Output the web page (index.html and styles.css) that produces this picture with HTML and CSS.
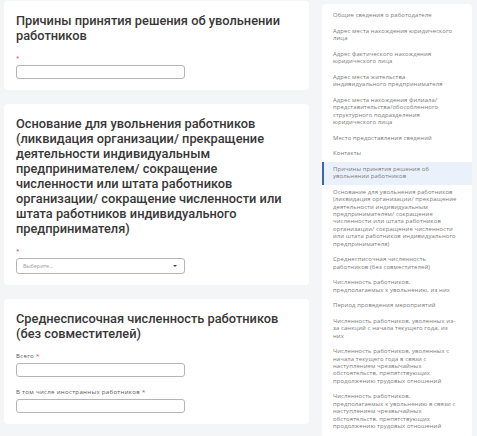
FILE: index.html
```html
<!DOCTYPE html>
<html lang="ru">
<head>
	<meta charset="UTF-8">
	<title>Сведения о высвобождении работников</title>
	<link rel="stylesheet" href="styles.css">
</head>
<body>
<div class="page">
	<div class="main">
		<section class="card">
			<h2 class="card_title">Причины принятия решения об увольнении работников</h2>
			<div class="field">
				<label class="field_label"><span class="req">*</span></label>
				<input type="text" class="field_input">
			</div>
		</section>
		<section class="card">
			<h2 class="card_title">Основание для увольнения работников (ликвидация организации/ прекращение деятельности индивидуальным предпринимателем/ сокращение численности или штата работников организации/ сокращение численности или штата работников индивидуального предпринимателя)</h2>
			<div class="field">
				<label class="field_label"><span class="req">*</span></label>
				<div class="select">
					<span class="select_text">Выберите...</span>
					<span class="select_caret"></span>
				</div>
			</div>
		</section>
		<section class="card">
			<h2 class="card_title">Среднесписочная численность работников (без совместителей)</h2>
			<div class="field">
				<label class="field_label">Всего <span class="req">*</span></label>
				<input type="text" class="field_input">
			</div>
			<div class="field">
				<label class="field_label">В том числе иностранных работников <span class="req">*</span></label>
				<input type="text" class="field_input">
			</div>
		</section>
	</div>
	<aside class="nav">
		<ul>
			<li>Общие сведения о работодателе</li>
			<li>Адрес места нахождения юридического<br>лица</li>
			<li>Адрес фактического нахождения<br>юридического лица</li>
			<li>Адрес места жительства<br>индивидуального предпринимателя</li>
			<li>Адрес места нахождения филиала/<br>представительства/обособленного<br>структурного подразделения<br>юридического лица</li>
			<li>Место предоставления сведений</li>
			<li>Контакты</li>
			<li class="active">Причины принятия решения об<br>увольнении работников</li>
			<li>Основание для увольнения работников<br>(ликвидация организации/ прекращение<br>деятельности индивидуальным<br>предпринимателем/ сокращение<br>численности или штата работников<br>организации/ сокращение численности<br>или штата работников индивидуального<br>предпринимателя)</li>
			<li>Среднесписочная численность<br>работников (без совместителей)</li>
			<li>Численность работников,<br>предполагаемых к увольнению, из них</li>
			<li>Период проведения мероприятий</li>
			<li>Численность работников, уволенных из-<br>за санкций с начала текущего года, из<br>них</li>
			<li>Численность работников, уволенных с<br>начала текущего года в связи с<br>наступлением чрезвычайных<br>обстоятельств, препятствующих<br>продолжению трудовых отношений</li>
			<li>Численность работников,<br>предполагаемых к увольнению в связи с<br>наступлением чрезвычайных<br>обстоятельств, препятствующих<br>продолжению трудовых отношений</li>
		</ul>
	</aside>
</div>
</body>
</html>
```

FILE: styles.css
```css
body{margin:0;background:#f4f5f7;font-family:"Open Sans","Liberation Sans",sans-serif;color:#333;}
.page{display:flex;align-items:flex-start;gap:13px;padding:0 5px 0 4px;}
.main{width:305px;display:flex;flex-direction:column;gap:14px;padding-top:1px;}
.card{background:#fff;border-radius:4px;padding:12px 12px 11px;}
.card_title{margin:0;font-family:Roboto,"Liberation Sans",sans-serif;font-size:12.8px;line-height:15px;font-weight:500;color:#383838;}
.field{margin-top:10px;}
.field+.field{margin-top:10px;}
.field_label{display:block;font-size:6.1px;letter-spacing:0.3px;line-height:10px;margin-bottom:2px;color:#555;}
.req{color:#d33;}
.field_input{display:block;box-sizing:border-box;width:169px;height:14px;margin:0;padding:0 5px;border:1px solid #b5b5b5;border-radius:3px;background:#fff;}
.select{box-sizing:border-box;width:169px;height:16px;border:1px solid #b5b5b5;border-radius:3px;display:flex;align-items:center;justify-content:space-between;padding:0 7px 0 6px;}
.select_text{font-size:5.4px;color:#999;}
.select_caret{width:0;height:0;border-left:2px solid transparent;border-right:2px solid transparent;border-top:2px solid #444;}
.nav{width:150px;margin-top:4px;padding:4px 0;background:#fff;border-radius:4px;}
.nav ul{list-style:none;margin:0;padding:0;}
.nav li{padding:4.1px 6px 4.1px 11px;font-size:5.9px;letter-spacing:0.12px;line-height:7.4px;color:#7a7a7a;white-space:nowrap;}
.nav li.active{background:#ebf1fa;border-left:2px solid #3966ad;padding-left:9px;}
```
